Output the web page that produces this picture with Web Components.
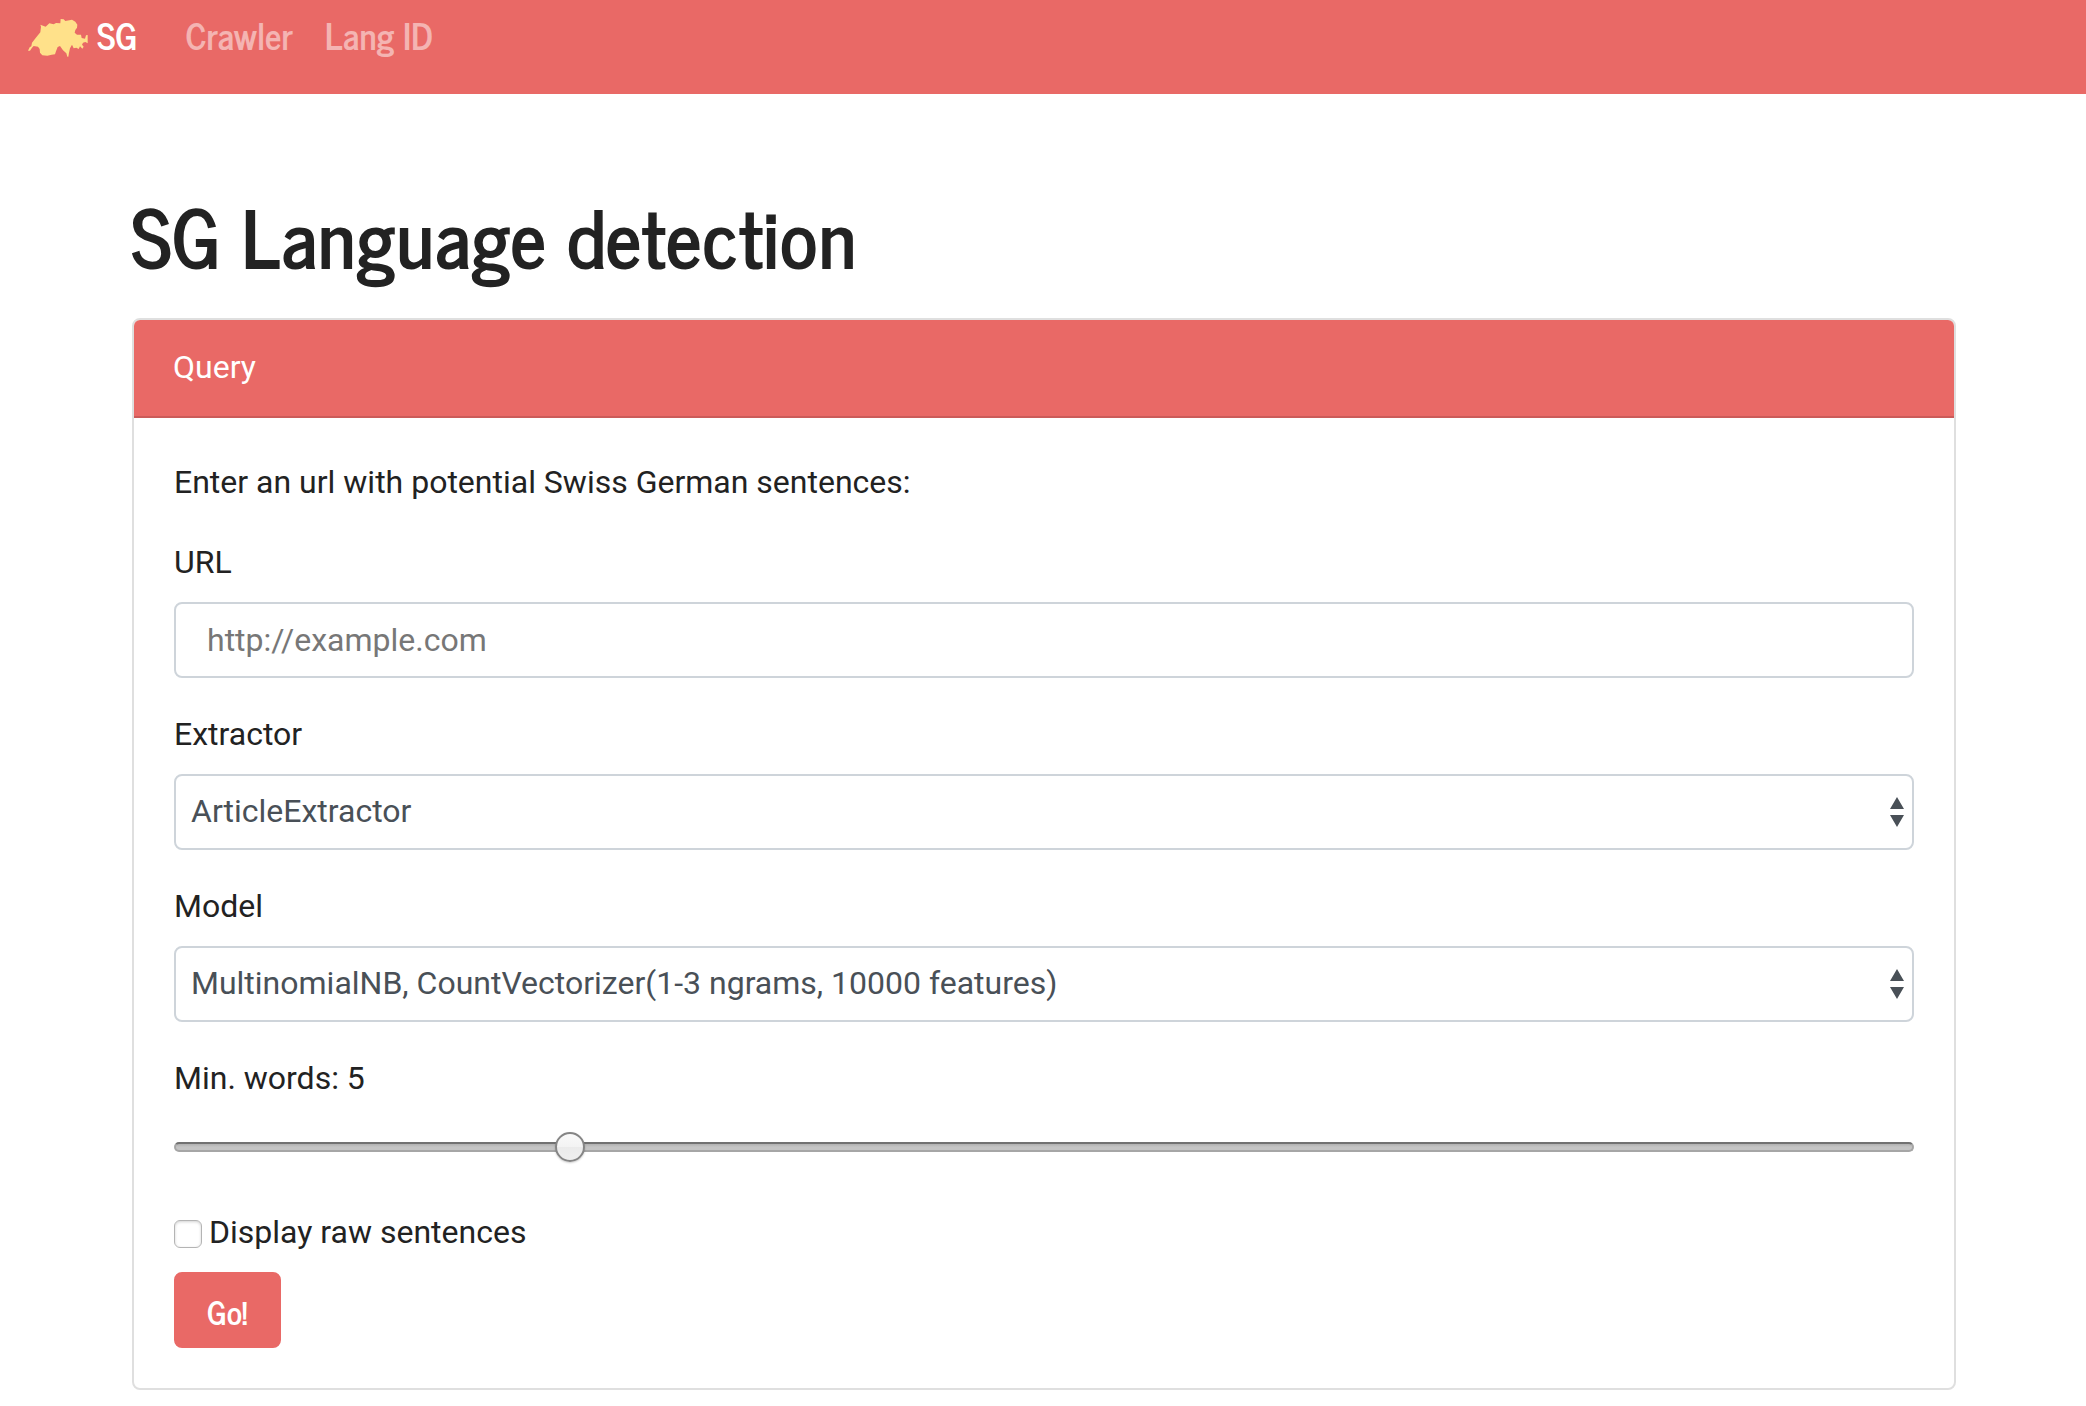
<!DOCTYPE html>
<html lang="en">
<head>
<meta charset="utf-8">
<meta name="viewport" content="width=device-width, initial-scale=1">
<title>SG Language detection</title>
<style>
  :root {
    --primary: #e96966;
    --text: #222;
    --control-text: #495057;
    --control-border: #ced4da;
    --heading-font: "News Cycle", "Roboto Condensed", sans-serif;
    --body-font: Roboto, "Liberation Sans", sans-serif;
  }
  body {
    margin: 0;
    background: #fff;
    color: var(--text);
    font: 32px/48px var(--body-font);
  }
</style>
</head>
<body>
<sg-navbar>
  <sg-nav-link href="#crawler">Crawler</sg-nav-link>
  <sg-nav-link href="#langid">Lang ID</sg-nav-link>
</sg-navbar>
<sg-page>
  <span slot="title">SG Language detection</span>
  <sg-card>
    <span slot="header">Query</span>
    <sg-query-form></sg-query-form>
  </sg-card>
</sg-page>

<script>
class SgElement extends HTMLElement {
  constructor() {
    super();
    this.attachShadow({ mode: 'open' }).innerHTML =
      '<style>*{box-sizing:border-box}' + this.constructor.css + '</style>' + this.constructor.html;
  }
}

class SgLogo extends SgElement {
  static css = `
    :host { display: block; width: 60px; height: 38px; }
    svg { display: block; width: 100%; height: 100%; }
  `;
  static html = `
    <svg viewBox="13 15 180 114" fill="#ffe18a" aria-hidden="true">
      <path d="M13 110 L18 100 L23 97 L25 86 L36 72 L50 55 L52 38 L50 32 L58 35 L66 38 L77 28 L90 31 L97 27 L110 28 L111 15 L120 16 L125 21 L145 17 L155 23 L161 32 L160 41 L155 48 L153 56 L160 62 L172 62 L174 72 L184 74 L187 64 L192 63 L192 88 L185 84 L178 86 L175 92 L180 98 L176 104 L169 97 L165 105 L158 101 L150 103 L145 92 L139 103 L136 116 L134 128 L131 128 L128 118 L118 109 L109 96 L102 99 L97 112 L94 121 L84 122 L71 125 L56 124 L49 116 L48 105 L43 98 L30 96 L25 101 L19 110 Z"/>
    </svg>`;
}

class SgNavLink extends SgElement {
  static css = `
    :host { display: block; }
    a { display: block; padding: 0 16px; color: rgba(255,255,255,.5); text-decoration: none; }
    a:hover { color: rgba(255,255,255,.75); }
  `;
  static html = `<a><slot></slot></a>`;
  connectedCallback() {
    this.shadowRoot.querySelector('a').href = this.getAttribute('href');
  }
}

class SgNavbar extends SgElement {
  static css = `
    :host { display: block; background: var(--primary); font: 700 36px/54px var(--heading-font); }
    nav { display: flex; align-items: flex-start; padding: 8px 28px 32px; }
    .brand { display: flex; align-items: center; gap: 9px; margin-right: 32px; color: #fff; text-decoration: none; }
    sg-logo { margin-top: 6px; }
    .links { display: flex; }
  `;
  static html = `
    <nav>
      <a class="brand" href="#home"><sg-logo></sg-logo><span>SG</span></a>
      <div class="links"><slot></slot></div>
    </nav>`;
}

class SgPage extends SgElement {
  static css = `
    :host { display: block; padding: 92px 130px 16px 131px; }
    h1 { margin: 0 0 36px; font: 700 80px/96px var(--heading-font); }
  `;
  static html = `<main><h1><slot name="title"></slot></h1><slot></slot></main>`;
}

class SgCard extends SgElement {
  static css = `
    :host { display: block; margin-left: 1px; border: 2px solid #dfdfdf; border-radius: 8px; overflow: hidden; }
    header { padding: 23px 39px 25px; background: var(--primary); color: #fff; border-bottom: 2px solid rgba(0,0,0,.125); }
    section { padding: 40px; }
  `;
  static html = `<header><slot name="header"></slot></header><section><slot></slot></section>`;
}

class SgQueryForm extends SgElement {
  static css = `
    :host { display: block; }
    form { display: flex; flex-direction: column; gap: 32px; }
    p { margin: 0; }
    .group { display: flex; flex-direction: column; gap: 16px; }
    input, select, button { margin: 0; font: inherit; }
    .control {
      width: 100%; height: 76px; border: 2px solid var(--control-border); border-radius: 8px;
      background: #fff; color: var(--control-text);
    }
    input.control { padding: 12px 31px; }
    input.control::placeholder { color: #777; opacity: 1; }
    .select { display: grid; }
    .select > * { grid-area: 1 / 1; }
    .select svg { justify-self: end; align-self: center; width: 14px; height: 30px; margin-right: 10px; fill: var(--control-text); pointer-events: none; }
    select.control { appearance: none; padding: 0 48px 2px 15px; }
    input[type=range] { appearance: none; width: 100%; height: 58px; background: transparent; }
    input[type=range]::-webkit-slider-runnable-track {
      height: 10px; border-radius: 5px; border: 2px solid #a6a6a6; border-top-color: #717171;
      background: linear-gradient(#b0b0b0, #c4c4c4 50%, #c4c4c4);
    }
    input[type=range]::-webkit-slider-thumb {
      appearance: none; width: 30px; height: 30px; margin-top: -12px;
      border: 2px solid #858585; border-radius: 50%;
      background: linear-gradient(#fafafa, #f3f3f3 50%, #ebebeb 50%, #efefef);
      box-shadow: 0 1px 2px rgba(0,0,0,.2);
    }
    .actions { display: flex; flex-direction: column; align-items: flex-start; gap: 16px; }
    .check { display: flex; align-items: center; gap: 7px; }
    input[type=checkbox] {
      appearance: none; width: 28px; height: 28px; margin-top: 4px; border: 1px solid #b4b4b4; border-radius: 6px;
      background: #fff; box-shadow: inset 0 1px 3px rgba(0,0,0,.18);
    }
    button {
      height: 76px; padding: 2px 32px 0 31px; border: 2px solid var(--primary); border-radius: 8px;
      background: var(--primary); color: #fff; font: 700 32px/48px var(--heading-font);
    }
  `;
  static html = `
    <form>
      <p>Enter an url with potential Swiss German sentences:</p>
      <div class="group">
        <label for="url">URL</label>
        <input class="control" id="url" type="text" placeholder="http://example.com">
      </div>
      <div class="group">
        <label for="extractor">Extractor</label>
        <div class="select">
          <select class="control" id="extractor"><option>ArticleExtractor</option></select>
          <svg viewBox="0 0 14 30" aria-hidden="true"><path d="M7 0L14 12H0ZM0 18H14L7 30Z"/></svg>
        </div>
      </div>
      <div class="group">
        <label for="model">Model</label>
        <div class="select">
          <select class="control" id="model"><option>MultinomialNB, CountVectorizer(1-3 ngrams, 10000 features)</option></select>
          <svg viewBox="0 0 14 30" aria-hidden="true"><path d="M7 0L14 12H0ZM0 18H14L7 30Z"/></svg>
        </div>
      </div>
      <div class="group">
        <label for="words">Min. words: <span id="count">5</span></label>
        <input id="words" type="range" min="1" max="19" value="5">
      </div>
      <div class="actions">
        <div class="check">
          <input id="raw" type="checkbox">
          <label for="raw">Display raw sentences</label>
        </div>
        <button type="submit">Go!</button>
      </div>
    </form>`;
  connectedCallback() {
    const root = this.shadowRoot;
    root.getElementById('words').addEventListener('input', e => {
      root.getElementById('count').textContent = e.target.value;
    });
    root.querySelector('form').addEventListener('submit', e => e.preventDefault());
  }
}

customElements.define('sg-logo', SgLogo);
customElements.define('sg-nav-link', SgNavLink);
customElements.define('sg-navbar', SgNavbar);
customElements.define('sg-page', SgPage);
customElements.define('sg-card', SgCard);
customElements.define('sg-query-form', SgQueryForm);
</script>
</body>
</html>
